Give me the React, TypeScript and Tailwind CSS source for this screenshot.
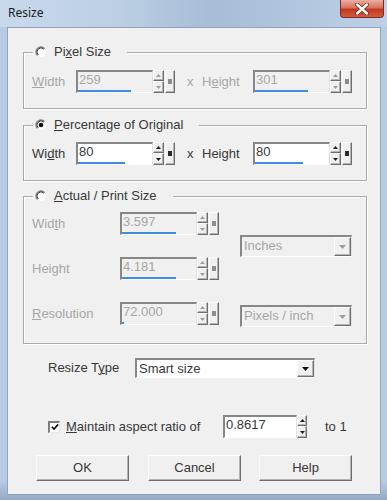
import React from "react";

const FONT = "font-['Liberation_Sans',Arial,sans-serif]";
const DIS = "text-[#a6a6a6]";
const EN = "text-[#383838]";
const RAISED =
  "bg-[#f0f0f0] border border-t-[#fbfbfb] border-l-[#fbfbfb] border-b-[#6e6e6e] border-r-[#6e6e6e] shadow-[inset_-1px_-1px_0_#b4b4b4]";
const SUNKEN =
  "border-t-2 border-l-2 border-t-[#878787] border-l-[#878787] border-b border-r border-b-[#fdfdfd] border-r-[#e2e2e2]";

function U({ children }: { children: React.ReactNode }) {
  return <span className="underline underline-offset-[1px] decoration-1">{children}</span>;
}

function Radio({ checked }: { checked?: boolean }) {
  return (
    <svg width="12" height="12" viewBox="0 0 12 12" className="shrink-0">
      <circle cx="6" cy="6" r="5" fill="#ffffff" />
      <path d="M2.46 9.54 A5 5 0 0 1 9.54 2.46" stroke="#7c7c7c" strokeWidth="1.3" fill="none" />
      <path d="M3.17 8.83 A4 4 0 0 1 8.83 3.17" stroke="#3c3c3c" strokeWidth="1" fill="none" />
      {checked && <circle cx="6" cy="6" r="2.3" fill="#111" />}
    </svg>
  );
}

function Arrow({ up, color }: { up?: boolean; color: string }) {
  return (
    <svg width="5" height="3" viewBox="0 0 5 3">
      {up ? <path d="M0 3 L2.5 0 L5 3 Z" fill={color} /> : <path d="M0 0 L5 0 L2.5 3 Z" fill={color} />}
    </svg>
  );
}

function Spin({ disabled, square = true, w = "w-[11px]" }: { disabled?: boolean; square?: boolean; w?: string }) {
  const c = disabled ? "#9c9c9c" : "#1e1e1e";
  return (
    <div className="flex h-[23px] shrink-0">
      <div className={`flex flex-col ${w}`}>
        <div className={`${RAISED} h-[11px] flex items-center justify-center`}>
          <Arrow up color={c} />
        </div>
        <div className={`${RAISED} h-[12px] flex items-center justify-center`}>
          <Arrow color={c} />
        </div>
      </div>
      {square && (
        <div className={`${RAISED} ml-[1px] w-[10px] flex items-center justify-center`}>
          <div className={`w-[4px] h-[5px] ${disabled ? "bg-[#8c8c8c]" : "bg-[#2a2a2a]"}`} />
        </div>
      )}
    </div>
  );
}

function Field({
  value,
  disabled,
  w = "w-[77px]",
  bar,
}: {
  value: string;
  disabled?: boolean;
  w?: string;
  bar?: string;
}) {
  return (
    <div className={`relative h-[23px] shrink-0 ${w} ${disabled ? "bg-[#f0f0f0]" : "bg-white"} ${SUNKEN}`}>
      <div className={`pl-[1px] leading-[15px] ${disabled ? DIS : EN}`}>{value}</div>
      {bar && <div className={`absolute bottom-0 left-0 h-[2px] bg-[#3a8ee6] ${bar}`} />}
    </div>
  );
}

function Combo({
  value,
  disabled,
  w,
  h = "h-[22px]",
}: {
  value: string;
  disabled?: boolean;
  w: string;
  h?: string;
}) {
  return (
    <div className={`flex ${h} ${w} ${disabled ? "bg-[#f0f0f0]" : "bg-white"} ${SUNKEN}`}>
      <div className={`flex-1 pl-[2px] leading-[17px] ${disabled ? DIS : EN}`}>{value}</div>
      <div className={`${RAISED} w-[17px] flex items-center justify-center`}>
        <svg width="7" height="4" viewBox="0 0 7 4">
          <path d="M0 0 L7 0 L3.5 4 Z" fill={disabled ? "#9c9c9c" : "#111"} />
        </svg>
      </div>
    </div>
  );
}

function Group({
  legend,
  checked,
  h,
  mt,
  children,
}: {
  legend: React.ReactNode;
  checked?: boolean;
  h: string;
  mt: string;
  children: React.ReactNode;
}) {
  return (
    <div
      className={`relative ${mt} ml-[15px] w-[344px] ${h} border border-[#a9a9a9] shadow-[inset_1px_1px_0_#ffffff,1px_1px_0_#ffffff]`}
    >
      <div className={`absolute left-[9px] top-[-9px] h-[16px] flex items-center gap-[7px] pl-[2px] pr-[16px] bg-[#f0f0f0] ${EN}`}>
        <Radio checked={checked} />
        <span className="leading-[16px]">{legend}</span>
      </div>
      {children}
    </div>
  );
}

function Btn({ label }: { label: string }) {
  return (
    <div className={`${RAISED} w-[93px] h-[26px] flex items-center justify-center ${EN}`}>{label}</div>
  );
}

export default function App() {
  return (
    <div className={`w-[387px] h-[500px] flex flex-col bg-[#b7cce3] text-[13px] ${FONT}`}>
      {/* Title bar */}
      <div className="h-[27px] shrink-0 flex justify-between bg-[linear-gradient(90deg,#c9d9ec_0%,#bccfe4_30%,#a6bdd6_55%,#b3c8df_80%,#bdd0e5_100%)]">
        <div className="pl-[8px] pt-[5px] text-[12px] text-[#1c1c1c] font-['Noto_Sans',Arial,sans-serif] leading-[16px]">
          Resize
        </div>
        <div className="mr-[3px] w-[44px] h-[18px] rounded-b-[4px] border border-t-0 border-[#7a2a20] bg-[linear-gradient(180deg,#eab0a2_0%,#d8735d_45%,#c2391f_55%,#d25a3e_100%)] flex items-center justify-center">
          <svg width="14" height="12" viewBox="0 0 14 12">
            <path d="M2 1.5 L12 10.5 M12 1.5 L2 10.5" stroke="#6e2a20" strokeWidth="4" strokeLinecap="round" />
            <path d="M2 1.5 L12 10.5 M12 1.5 L2 10.5" stroke="#ffffff" strokeWidth="2.4" strokeLinecap="round" />
          </svg>
        </div>
      </div>

      {/* Frame + client */}
      <div className="flex-1 flex flex-col pl-[7px] pr-[6px] pb-[5px] bg-[linear-gradient(180deg,#b7cce3_0%,#b7cce3_96%,#93aac4_100%)]">
        <div className="flex-1 flex flex-col bg-[#f0f0f0] border border-[#8ea4bc]">
          {/* Pixel Size */}
          <Group
            mt="mt-[24px]"
            h="h-[57px]"
            legend={
              <>
                Pi<U>x</U>el Size
              </>
            }
          >
            <div className="flex items-center pt-[17px] pl-[8px]">
              <div className={`w-[44px] ${DIS}`}>
                <U>W</U>idth
              </div>
              <Field value="259" disabled bar="w-[53px]" />
              <Spin disabled />
              <div className="w-[12px]" />
              <div className={`w-[15px] ${DIS}`}>x</div>
              <div className={`w-[51px] ${DIS}`}>
                H<U>e</U>ight
              </div>
              <Field value="301" disabled bar="w-[53px]" />
              <Spin disabled />
            </div>
          </Group>

          {/* Percentage */}
          <Group
            mt="mt-[16px]"
            h="h-[56px]"
            checked
            legend={
              <>
                <U>P</U>ercentage of Original
              </>
            }
          >
            <div className="flex items-center pt-[16px] pl-[8px]">
              <div className={`w-[44px] ${EN}`}>
                Wi<U>d</U>th
              </div>
              <Field value="80" bar="w-[47px]" />
              <Spin />
              <div className="w-[12px]" />
              <div className={`w-[15px] ${EN}`}>x</div>
              <div className={`w-[51px] ${EN}`}>
                Hei<U>g</U>ht
              </div>
              <Field value="80" bar="w-[48px]" />
              <Spin />
            </div>
          </Group>

          {/* Actual / Print Size */}
          <Group
            mt="mt-[15px]"
            h="h-[148px]"
            legend={
              <>
                <U>A</U>ctual / Print Size
              </>
            }
          >
            <div className="flex pt-[15px] pl-[8px]">
              <div className="flex flex-col gap-[22px]">
                <div className="flex items-center">
                  <div className={`w-[88px] ${DIS}`}>
                    Wid<U>t</U>h
                  </div>
                  <Field value="3.597" disabled bar="w-[54px]" />
                  <Spin disabled />
                </div>
                <div className="flex items-center">
                  <div className={`w-[88px] ${DIS}`}>
                    Hei<U>g</U>ht
                  </div>
                  <Field value="4.181" disabled bar="w-[54px]" />
                  <Spin disabled />
                </div>
                <div className="flex items-center">
                  <div className={`w-[88px] ${DIS}`}>
                    <U>R</U>esolution
                  </div>
                  <Field value="72.000" disabled bar="w-[2px]" />
                  <Spin disabled />
                </div>
              </div>
              <div className="flex flex-col ml-[21px] pt-[23px] gap-[48px]">
                <Combo value="Inches" disabled w="w-[112px]" />
                <Combo value="Pixels / inch" disabled w="w-[112px]" />
              </div>
            </div>
          </Group>

          {/* Resize Type */}
          <div className="flex items-center mt-[14px] ml-[40px]">
            <div className={`w-[87px] ${EN}`}>
              Resize T<U>y</U>pe
            </div>
            <Combo value="Smart size" w="w-[180px]" h="h-[20px]" />
          </div>

          {/* Maintain aspect ratio */}
          <div className="flex items-center mt-[37px] ml-[40px]">
            <div className="w-[175px] flex items-center">
              <div className="w-[12px] h-[12px] bg-white border-t-2 border-l-2 border-t-[#7e7e7e] border-l-[#7e7e7e] border-b border-r border-b-[#e8e8e8] border-r-[#e8e8e8] flex items-center justify-center">
                <svg width="8" height="8" viewBox="0 0 8 8">
                  <path d="M0.8 3.8 L3 6 L7.2 1.4" stroke="#111" strokeWidth="1.6" fill="none" />
                </svg>
              </div>
              <div className={`ml-[6px] ${EN}`}>
                <U>M</U>aintain aspect ratio of
              </div>
            </div>
            <Field value="0.8617" w="w-[74px]" />
            <Spin square={false} w="w-[10px]" />
            <div className={`ml-[18px] ${EN}`}>to 1</div>
          </div>

          {/* Buttons */}
          <div className="flex mt-[17px] ml-[28px]">
            <Btn label="OK" />
            <div className="w-[19px]" />
            <Btn label="Cancel" />
            <div className="w-[18px]" />
            <Btn label="Help" />
          </div>
        </div>
      </div>
    </div>
  );
}
